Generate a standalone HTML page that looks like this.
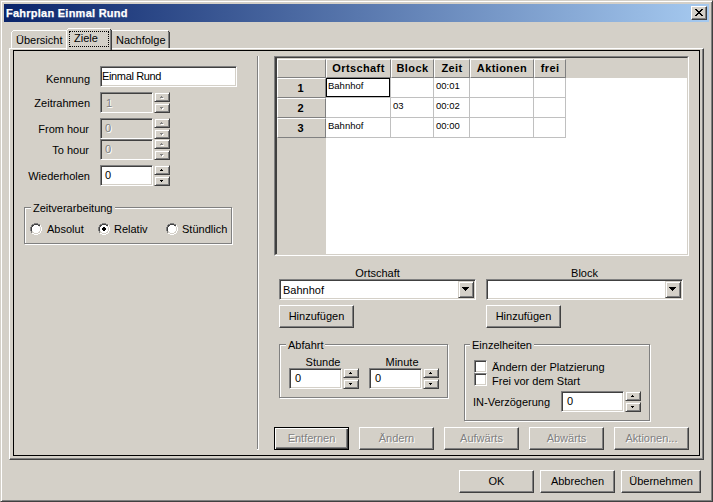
<!DOCTYPE html>
<html><head><meta charset="utf-8"><style>
*{box-sizing:border-box;margin:0;padding:0}
html,body{width:713px;height:502px;overflow:hidden;background:#d4d0c8}
body{position:relative;font-family:"Liberation Sans",sans-serif;font-size:11px;line-height:13px;color:#000}
.a{position:absolute}
.t{position:absolute;white-space:pre;line-height:13px}
.r{text-align:right}
.c{text-align:center}
.b{font-weight:bold}
.dis{color:#808080;text-shadow:1px 1px 0 #fff}
.btn{position:absolute;background:#d4d0c8;border:1px solid;border-color:#fff #404040 #404040 #fff;box-shadow:inset -1px -1px 0 #808080}
.btnd{position:absolute;background:#d4d0c8;border:1px solid #000;box-shadow:inset 1px 1px 0 #fff,inset -1px -1px 0 #404040,inset -2px -2px 0 #808080}
.edit{position:absolute;background:#fff;border:1px solid;border-color:#808080 #fff #fff #808080;box-shadow:inset 1px 1px 0 #404040,inset -1px -1px 0 #d4d0c8}
.edit.dd{background:#d4d0c8}
.sb{position:absolute;background:#d4d0c8;border:1px solid;border-color:#d4d0c8 #404040 #404040 #d4d0c8;box-shadow:inset 1px 1px 0 #fff,inset -1px -1px 0 #808080}
.grp{position:absolute;border:1px solid #808080;box-shadow:inset 1px 1px 0 #fff,1px 1px 0 #fff}
.gl{position:absolute;background:#d4d0c8;white-space:pre;line-height:13px;padding:0 2px}
svg{position:absolute;overflow:visible}
</style></head><body>
<div class="a" style="left:0px;top:0px;width:713px;height:502px;border:1px solid;border-color:#d4d0c8 #404040 #404040 #d4d0c8;box-shadow:inset 1px 1px 0 #fff,inset -1px -1px 0 #808080"></div>
<div class="a" style="left:4px;top:4px;width:705px;height:18px;background:linear-gradient(to right,#0a246a,#a6caf0)"></div>
<div class="t b" style="left:6px;top:7px;color:#fff;letter-spacing:0.25px;-webkit-text-stroke:0.25px #fff">Fahrplan Einmal Rund</div>
<div class="btn" style="left:691px;top:6px;width:16px;height:14px;"></div>
<svg style="left:695px;top:9px" width="8" height="7" shape-rendering="crispEdges"><rect x="0" y="0" width="2" height="1" fill="#000"/><rect x="6" y="0" width="2" height="1" fill="#000"/><rect x="1" y="1" width="2" height="1" fill="#000"/><rect x="5" y="1" width="2" height="1" fill="#000"/><rect x="2" y="2" width="4" height="1" fill="#000"/><rect x="3" y="3" width="2" height="1" fill="#000"/><rect x="2" y="4" width="4" height="1" fill="#000"/><rect x="1" y="5" width="2" height="1" fill="#000"/><rect x="5" y="5" width="2" height="1" fill="#000"/><rect x="0" y="6" width="2" height="1" fill="#000"/><rect x="6" y="6" width="2" height="1" fill="#000"/></svg>
<div class="a" style="left:9px;top:48px;width:695px;height:412px;border:1px solid;border-color:#fff #404040 #404040 #fff;box-shadow:inset -1px -1px 0 #808080"></div>
<div class="a" style="left:11px;top:30px;width:56px;height:18px;border-left:1px solid #fff;border-top:1px solid #fff;background:#d4d0c8"></div>
<div class="a" style="left:11px;top:30px;width:2px;height:2px;background:#d4d0c8"></div>
<div class="a" style="left:12px;top:31px;width:1px;height:1px;background:#fff"></div>
<div class="t " style="left:16px;top:34px;">Übersicht</div>
<div class="a" style="left:109px;top:30px;width:61px;height:18px;border-top:1px solid #fff;border-right:1px solid #404040;box-shadow:inset -1px 0 0 #808080;background:#d4d0c8"></div>
<div class="a" style="left:168px;top:30px;width:2px;height:2px;background:#d4d0c8"></div>
<div class="a" style="left:168px;top:31px;width:1px;height:1px;background:#404040"></div>
<div class="t " style="left:116px;top:34px;">Nachfolge</div>
<div class="a" style="left:66px;top:28px;width:46px;height:22px;border-left:1px solid #fff;border-top:1px solid #fff;border-right:1px solid #404040;box-shadow:inset -1px 0 0 #808080;background:#d4d0c8"></div>
<div class="a" style="left:66px;top:28px;width:2px;height:2px;background:#d4d0c8"></div>
<div class="a" style="left:67px;top:29px;width:1px;height:1px;background:#fff"></div>
<div class="a" style="left:110px;top:28px;width:2px;height:2px;background:#d4d0c8"></div>
<div class="a" style="left:110px;top:29px;width:1px;height:1px;background:#404040"></div>
<div class="t " style="left:74px;top:32px;">Ziele</div>
<div class="a" style="left:69px;top:31px;width:40px;height:16px;border:1px dotted #000"></div>
<div class="a" style="left:13px;top:50px;width:687px;height:406px;border:1px solid #000"></div>
<div class="a" style="left:257px;top:56px;width:2px;height:393px;border-left:1px solid #808080;border-right:1px solid #fff"></div>
<div class="a" style="left:257px;top:449px;width:2px;height:1px;background:#fff"></div>
<div class="t r " style="left:-60px;width:150px;top:73px;">Kennung</div>
<div class="edit" style="left:100px;top:66px;width:137px;height:21px;"></div>
<div class="t " style="left:102px;top:70px;letter-spacing:-0.35px">Einmal Rund</div>
<div class="t r " style="left:-60px;width:150px;top:97px;">Zeitrahmen</div>
<div class="edit dd" style="left:100px;top:92px;width:53px;height:21px;"></div>
<div class="t dis" style="left:106px;top:97px;">1</div>
<div class="sb" style="left:154px;top:92px;width:16px;height:10px;"></div>
<div class="sb" style="left:154px;top:103px;width:16px;height:10px;"></div>
<svg style="left:161px;top:97px" width="3" height="2" shape-rendering="crispEdges"><rect x="1" y="0" width="1" height="1" fill="#fff"/><rect x="0" y="1" width="3" height="1" fill="#fff"/></svg>
<svg style="left:160px;top:96px" width="3" height="2" shape-rendering="crispEdges"><rect x="1" y="0" width="1" height="1" fill="#808080"/><rect x="0" y="1" width="3" height="1" fill="#808080"/></svg>
<svg style="left:161px;top:108px" width="3" height="2" shape-rendering="crispEdges"><rect x="0" y="0" width="3" height="1" fill="#fff"/><rect x="1" y="1" width="1" height="1" fill="#fff"/></svg>
<svg style="left:160px;top:107px" width="3" height="2" shape-rendering="crispEdges"><rect x="0" y="0" width="3" height="1" fill="#808080"/><rect x="1" y="1" width="1" height="1" fill="#808080"/></svg>
<div class="t r " style="left:-61px;width:150px;top:123px;">From hour</div>
<div class="edit dd" style="left:100px;top:118px;width:53px;height:21px;"></div>
<div class="t dis" style="left:105px;top:122px;">0</div>
<div class="sb" style="left:154px;top:118px;width:16px;height:10px;"></div>
<div class="sb" style="left:154px;top:129px;width:16px;height:10px;"></div>
<svg style="left:161px;top:123px" width="3" height="2" shape-rendering="crispEdges"><rect x="1" y="0" width="1" height="1" fill="#fff"/><rect x="0" y="1" width="3" height="1" fill="#fff"/></svg>
<svg style="left:160px;top:122px" width="3" height="2" shape-rendering="crispEdges"><rect x="1" y="0" width="1" height="1" fill="#808080"/><rect x="0" y="1" width="3" height="1" fill="#808080"/></svg>
<svg style="left:161px;top:134px" width="3" height="2" shape-rendering="crispEdges"><rect x="0" y="0" width="3" height="1" fill="#fff"/><rect x="1" y="1" width="1" height="1" fill="#fff"/></svg>
<svg style="left:160px;top:133px" width="3" height="2" shape-rendering="crispEdges"><rect x="0" y="0" width="3" height="1" fill="#808080"/><rect x="1" y="1" width="1" height="1" fill="#808080"/></svg>
<div class="t r " style="left:-61px;width:150px;top:144px;">To hour</div>
<div class="edit dd" style="left:100px;top:139px;width:53px;height:21px;"></div>
<div class="t dis" style="left:105px;top:143px;">0</div>
<div class="sb" style="left:154px;top:139px;width:16px;height:10px;"></div>
<div class="sb" style="left:154px;top:150px;width:16px;height:10px;"></div>
<svg style="left:161px;top:144px" width="3" height="2" shape-rendering="crispEdges"><rect x="1" y="0" width="1" height="1" fill="#fff"/><rect x="0" y="1" width="3" height="1" fill="#fff"/></svg>
<svg style="left:160px;top:143px" width="3" height="2" shape-rendering="crispEdges"><rect x="1" y="0" width="1" height="1" fill="#808080"/><rect x="0" y="1" width="3" height="1" fill="#808080"/></svg>
<svg style="left:161px;top:155px" width="3" height="2" shape-rendering="crispEdges"><rect x="0" y="0" width="3" height="1" fill="#fff"/><rect x="1" y="1" width="1" height="1" fill="#fff"/></svg>
<svg style="left:160px;top:154px" width="3" height="2" shape-rendering="crispEdges"><rect x="0" y="0" width="3" height="1" fill="#808080"/><rect x="1" y="1" width="1" height="1" fill="#808080"/></svg>
<div class="t r " style="left:-60px;width:150px;top:170px;">Wiederholen</div>
<div class="edit" style="left:100px;top:165px;width:53px;height:21px;"></div>
<div class="t " style="left:105px;top:169px;">0</div>
<div class="sb" style="left:154px;top:165px;width:16px;height:10px;"></div>
<div class="sb" style="left:154px;top:176px;width:16px;height:10px;"></div>
<svg style="left:160px;top:169px" width="3" height="2" shape-rendering="crispEdges"><rect x="1" y="0" width="1" height="1" fill="#000"/><rect x="0" y="1" width="3" height="1" fill="#000"/></svg>
<svg style="left:160px;top:180px" width="3" height="2" shape-rendering="crispEdges"><rect x="0" y="0" width="3" height="1" fill="#000"/><rect x="1" y="1" width="1" height="1" fill="#000"/></svg>
<div class="grp" style="left:24px;top:207px;width:208px;height:37px;"></div>
<div class="gl" style="left:31px;top:202px">Zeitverarbeitung</div>
<svg style="left:30px;top:223px" width="12" height="12" shape-rendering="crispEdges"><rect x="4" y="0" width="4" height="1" fill="#808080"/><rect x="2" y="1" width="2" height="1" fill="#808080"/><rect x="4" y="1" width="4" height="1" fill="#404040"/><rect x="8" y="1" width="2" height="1" fill="#808080"/><rect x="1" y="2" width="1" height="1" fill="#808080"/><rect x="2" y="2" width="2" height="1" fill="#404040"/><rect x="4" y="2" width="4" height="1" fill="#fff"/><rect x="8" y="2" width="2" height="1" fill="#404040"/><rect x="10" y="2" width="1" height="1" fill="#fff"/><rect x="1" y="3" width="1" height="1" fill="#808080"/><rect x="2" y="3" width="1" height="1" fill="#404040"/><rect x="3" y="3" width="6" height="1" fill="#fff"/><rect x="9" y="3" width="1" height="1" fill="#d4d0c8"/><rect x="10" y="3" width="1" height="1" fill="#fff"/><rect x="0" y="4" width="1" height="1" fill="#808080"/><rect x="1" y="4" width="1" height="1" fill="#404040"/><rect x="2" y="4" width="8" height="1" fill="#fff"/><rect x="10" y="4" width="1" height="1" fill="#d4d0c8"/><rect x="11" y="4" width="1" height="1" fill="#fff"/><rect x="0" y="5" width="1" height="1" fill="#808080"/><rect x="1" y="5" width="1" height="1" fill="#404040"/><rect x="2" y="5" width="8" height="1" fill="#fff"/><rect x="10" y="5" width="1" height="1" fill="#d4d0c8"/><rect x="11" y="5" width="1" height="1" fill="#fff"/><rect x="0" y="6" width="1" height="1" fill="#808080"/><rect x="1" y="6" width="1" height="1" fill="#404040"/><rect x="2" y="6" width="8" height="1" fill="#fff"/><rect x="10" y="6" width="1" height="1" fill="#d4d0c8"/><rect x="11" y="6" width="1" height="1" fill="#fff"/><rect x="0" y="7" width="1" height="1" fill="#808080"/><rect x="1" y="7" width="1" height="1" fill="#404040"/><rect x="2" y="7" width="8" height="1" fill="#fff"/><rect x="10" y="7" width="1" height="1" fill="#d4d0c8"/><rect x="11" y="7" width="1" height="1" fill="#fff"/><rect x="1" y="8" width="1" height="1" fill="#808080"/><rect x="2" y="8" width="1" height="1" fill="#d4d0c8"/><rect x="3" y="8" width="6" height="1" fill="#fff"/><rect x="9" y="8" width="1" height="1" fill="#d4d0c8"/><rect x="10" y="8" width="1" height="1" fill="#fff"/><rect x="1" y="9" width="1" height="1" fill="#808080"/><rect x="2" y="9" width="2" height="1" fill="#d4d0c8"/><rect x="4" y="9" width="4" height="1" fill="#fff"/><rect x="8" y="9" width="2" height="1" fill="#d4d0c8"/><rect x="10" y="9" width="1" height="1" fill="#fff"/><rect x="2" y="10" width="2" height="1" fill="#fff"/><rect x="4" y="10" width="4" height="1" fill="#d4d0c8"/><rect x="8" y="10" width="2" height="1" fill="#fff"/><rect x="4" y="11" width="4" height="1" fill="#fff"/></svg>
<div class="t " style="left:47px;top:223px;">Absolut</div>
<svg style="left:98px;top:223px" width="12" height="12" shape-rendering="crispEdges"><rect x="4" y="0" width="4" height="1" fill="#808080"/><rect x="2" y="1" width="2" height="1" fill="#808080"/><rect x="4" y="1" width="4" height="1" fill="#404040"/><rect x="8" y="1" width="2" height="1" fill="#808080"/><rect x="1" y="2" width="1" height="1" fill="#808080"/><rect x="2" y="2" width="2" height="1" fill="#404040"/><rect x="4" y="2" width="4" height="1" fill="#fff"/><rect x="8" y="2" width="2" height="1" fill="#404040"/><rect x="10" y="2" width="1" height="1" fill="#fff"/><rect x="1" y="3" width="1" height="1" fill="#808080"/><rect x="2" y="3" width="1" height="1" fill="#404040"/><rect x="3" y="3" width="6" height="1" fill="#fff"/><rect x="9" y="3" width="1" height="1" fill="#d4d0c8"/><rect x="10" y="3" width="1" height="1" fill="#fff"/><rect x="0" y="4" width="1" height="1" fill="#808080"/><rect x="1" y="4" width="1" height="1" fill="#404040"/><rect x="2" y="4" width="8" height="1" fill="#fff"/><rect x="10" y="4" width="1" height="1" fill="#d4d0c8"/><rect x="11" y="4" width="1" height="1" fill="#fff"/><rect x="0" y="5" width="1" height="1" fill="#808080"/><rect x="1" y="5" width="1" height="1" fill="#404040"/><rect x="2" y="5" width="8" height="1" fill="#fff"/><rect x="10" y="5" width="1" height="1" fill="#d4d0c8"/><rect x="11" y="5" width="1" height="1" fill="#fff"/><rect x="0" y="6" width="1" height="1" fill="#808080"/><rect x="1" y="6" width="1" height="1" fill="#404040"/><rect x="2" y="6" width="8" height="1" fill="#fff"/><rect x="10" y="6" width="1" height="1" fill="#d4d0c8"/><rect x="11" y="6" width="1" height="1" fill="#fff"/><rect x="0" y="7" width="1" height="1" fill="#808080"/><rect x="1" y="7" width="1" height="1" fill="#404040"/><rect x="2" y="7" width="8" height="1" fill="#fff"/><rect x="10" y="7" width="1" height="1" fill="#d4d0c8"/><rect x="11" y="7" width="1" height="1" fill="#fff"/><rect x="1" y="8" width="1" height="1" fill="#808080"/><rect x="2" y="8" width="1" height="1" fill="#d4d0c8"/><rect x="3" y="8" width="6" height="1" fill="#fff"/><rect x="9" y="8" width="1" height="1" fill="#d4d0c8"/><rect x="10" y="8" width="1" height="1" fill="#fff"/><rect x="1" y="9" width="1" height="1" fill="#808080"/><rect x="2" y="9" width="2" height="1" fill="#d4d0c8"/><rect x="4" y="9" width="4" height="1" fill="#fff"/><rect x="8" y="9" width="2" height="1" fill="#d4d0c8"/><rect x="10" y="9" width="1" height="1" fill="#fff"/><rect x="2" y="10" width="2" height="1" fill="#fff"/><rect x="4" y="10" width="4" height="1" fill="#d4d0c8"/><rect x="8" y="10" width="2" height="1" fill="#fff"/><rect x="4" y="11" width="4" height="1" fill="#fff"/></svg>
<svg style="left:102px;top:227px" width="4" height="4" shape-rendering="crispEdges"><rect x="1" y="0" width="2" height="1" fill="#000"/><rect x="0" y="1" width="4" height="1" fill="#000"/><rect x="0" y="2" width="4" height="1" fill="#000"/><rect x="1" y="3" width="2" height="1" fill="#000"/></svg>
<div class="t " style="left:114px;top:223px;">Relativ</div>
<svg style="left:166px;top:223px" width="12" height="12" shape-rendering="crispEdges"><rect x="4" y="0" width="4" height="1" fill="#808080"/><rect x="2" y="1" width="2" height="1" fill="#808080"/><rect x="4" y="1" width="4" height="1" fill="#404040"/><rect x="8" y="1" width="2" height="1" fill="#808080"/><rect x="1" y="2" width="1" height="1" fill="#808080"/><rect x="2" y="2" width="2" height="1" fill="#404040"/><rect x="4" y="2" width="4" height="1" fill="#fff"/><rect x="8" y="2" width="2" height="1" fill="#404040"/><rect x="10" y="2" width="1" height="1" fill="#fff"/><rect x="1" y="3" width="1" height="1" fill="#808080"/><rect x="2" y="3" width="1" height="1" fill="#404040"/><rect x="3" y="3" width="6" height="1" fill="#fff"/><rect x="9" y="3" width="1" height="1" fill="#d4d0c8"/><rect x="10" y="3" width="1" height="1" fill="#fff"/><rect x="0" y="4" width="1" height="1" fill="#808080"/><rect x="1" y="4" width="1" height="1" fill="#404040"/><rect x="2" y="4" width="8" height="1" fill="#fff"/><rect x="10" y="4" width="1" height="1" fill="#d4d0c8"/><rect x="11" y="4" width="1" height="1" fill="#fff"/><rect x="0" y="5" width="1" height="1" fill="#808080"/><rect x="1" y="5" width="1" height="1" fill="#404040"/><rect x="2" y="5" width="8" height="1" fill="#fff"/><rect x="10" y="5" width="1" height="1" fill="#d4d0c8"/><rect x="11" y="5" width="1" height="1" fill="#fff"/><rect x="0" y="6" width="1" height="1" fill="#808080"/><rect x="1" y="6" width="1" height="1" fill="#404040"/><rect x="2" y="6" width="8" height="1" fill="#fff"/><rect x="10" y="6" width="1" height="1" fill="#d4d0c8"/><rect x="11" y="6" width="1" height="1" fill="#fff"/><rect x="0" y="7" width="1" height="1" fill="#808080"/><rect x="1" y="7" width="1" height="1" fill="#404040"/><rect x="2" y="7" width="8" height="1" fill="#fff"/><rect x="10" y="7" width="1" height="1" fill="#d4d0c8"/><rect x="11" y="7" width="1" height="1" fill="#fff"/><rect x="1" y="8" width="1" height="1" fill="#808080"/><rect x="2" y="8" width="1" height="1" fill="#d4d0c8"/><rect x="3" y="8" width="6" height="1" fill="#fff"/><rect x="9" y="8" width="1" height="1" fill="#d4d0c8"/><rect x="10" y="8" width="1" height="1" fill="#fff"/><rect x="1" y="9" width="1" height="1" fill="#808080"/><rect x="2" y="9" width="2" height="1" fill="#d4d0c8"/><rect x="4" y="9" width="4" height="1" fill="#fff"/><rect x="8" y="9" width="2" height="1" fill="#d4d0c8"/><rect x="10" y="9" width="1" height="1" fill="#fff"/><rect x="2" y="10" width="2" height="1" fill="#fff"/><rect x="4" y="10" width="4" height="1" fill="#d4d0c8"/><rect x="8" y="10" width="2" height="1" fill="#fff"/><rect x="4" y="11" width="4" height="1" fill="#fff"/></svg>
<div class="t " style="left:182px;top:223px;">Stündlich</div>
<div class="a" style="left:274px;top:56px;width:415px;height:200px;background:#fff;border:2px solid;border-color:#808080 #fff #fff #808080"></div>
<div class="a" style="left:275px;top:57px;width:413px;height:198px;border:1px solid;border-color:#404040 #d4d0c8 #d4d0c8 #404040"></div>
<div class="a" style="left:276px;top:58px;width:411px;height:20px;background:#d4d0c8;border-left:1px solid #404040"></div>
<div class="a" style="left:276px;top:58px;width:50px;height:196px;background:#d4d0c8;border-left:1px solid #404040"></div>
<div class="a" style="left:277px;top:59px;width:49px;height:19px;border-left:1px solid #fff;border-top:1px solid #fff;border-right:1px solid #808080;border-bottom:1px solid #808080"></div>
<div class="a" style="left:326px;top:59px;width:65px;height:19px;border-left:1px solid #fff;border-top:1px solid #fff;border-right:1px solid #808080;border-bottom:1px solid #808080"></div>
<div class="t c b" style="left:326px;width:65px;top:62px;letter-spacing:0.4px">Ortschaft</div>
<div class="a" style="left:391px;top:59px;width:43px;height:19px;border-left:1px solid #fff;border-top:1px solid #fff;border-right:1px solid #808080;border-bottom:1px solid #808080"></div>
<div class="t c b" style="left:391px;width:43px;top:62px;letter-spacing:0.4px">Block</div>
<div class="a" style="left:434px;top:59px;width:36px;height:19px;border-left:1px solid #fff;border-top:1px solid #fff;border-right:1px solid #808080;border-bottom:1px solid #808080"></div>
<div class="t c b" style="left:434px;width:36px;top:62px;letter-spacing:0.4px">Zeit</div>
<div class="a" style="left:470px;top:59px;width:64px;height:19px;border-left:1px solid #fff;border-top:1px solid #fff;border-right:1px solid #808080;border-bottom:1px solid #808080"></div>
<div class="t c b" style="left:470px;width:64px;top:62px;letter-spacing:0.4px">Aktionen</div>
<div class="a" style="left:534px;top:59px;width:32px;height:19px;border-left:1px solid #fff;border-top:1px solid #fff;border-right:1px solid #808080;border-bottom:1px solid #808080"></div>
<div class="t c b" style="left:534px;width:32px;top:62px;letter-spacing:0.4px">frei</div>
<div class="a" style="left:277px;top:78px;width:49px;height:20px;border-left:1px solid #fff;border-top:1px solid #fff;border-right:1px solid #808080;border-bottom:1px solid #808080"></div>
<div class="t c b" style="left:276px;width:49px;top:82px;">1</div>
<div class="a" style="left:277px;top:98px;width:49px;height:20px;border-left:1px solid #fff;border-top:1px solid #fff;border-right:1px solid #808080;border-bottom:1px solid #808080"></div>
<div class="t c b" style="left:276px;width:49px;top:102px;">2</div>
<div class="a" style="left:277px;top:118px;width:49px;height:20px;border-left:1px solid #fff;border-top:1px solid #fff;border-right:1px solid #808080;border-bottom:1px solid #808080"></div>
<div class="t c b" style="left:276px;width:49px;top:122px;">3</div>
<div class="a" style="left:390px;top:78px;width:1px;height:60px;background:#c0c0c0"></div>
<div class="a" style="left:433px;top:78px;width:1px;height:60px;background:#c0c0c0"></div>
<div class="a" style="left:469px;top:78px;width:1px;height:60px;background:#c0c0c0"></div>
<div class="a" style="left:533px;top:78px;width:1px;height:60px;background:#c0c0c0"></div>
<div class="a" style="left:565px;top:78px;width:1px;height:60px;background:#c0c0c0"></div>
<div class="a" style="left:326px;top:97px;width:240px;height:1px;background:#c0c0c0"></div>
<div class="a" style="left:326px;top:117px;width:240px;height:1px;background:#c0c0c0"></div>
<div class="a" style="left:326px;top:137px;width:240px;height:1px;background:#c0c0c0"></div>
<div class="a" style="left:326px;top:78px;width:64px;height:19px;border:1px solid #000"></div>
<div class="t" style="left:328px;top:79px;font-size:9.5px">Bahnhof</div>
<div class="t" style="left:436px;top:79px;font-size:9.5px">00:01</div>
<div class="t" style="left:393px;top:99px;font-size:9.5px">03</div>
<div class="t" style="left:436px;top:99px;font-size:9.5px">00:02</div>
<div class="t" style="left:328px;top:119px;font-size:9.5px">Bahnhof</div>
<div class="t" style="left:436px;top:119px;font-size:9.5px">00:00</div>
<div class="t c " style="left:279px;width:197px;top:267px;">Ortschaft</div>
<div class="edit" style="left:279px;top:279px;width:197px;height:21px;"></div>
<div class="t " style="left:283px;top:284px;">Bahnhof</div>
<div class="btn" style="left:458px;top:281px;width:16px;height:17px;border-color:#d4d0c8 #404040 #404040 #d4d0c8;box-shadow:inset 1px 1px 0 #fff,inset -1px -1px 0 #808080"></div>
<svg style="left:462px;top:287px" width="7" height="4" shape-rendering="crispEdges"><rect x="0" y="0" width="7" height="1" fill="#000"/><rect x="1" y="1" width="5" height="1" fill="#000"/><rect x="2" y="2" width="3" height="1" fill="#000"/><rect x="3" y="3" width="1" height="1" fill="#000"/></svg>
<div class="btn" style="left:279px;top:305px;width:75px;height:23px;"></div>
<div class="t c " style="left:279px;width:75px;top:310px;">Hinzufügen</div>
<div class="t c " style="left:486px;width:197px;top:267px;">Block</div>
<div class="edit" style="left:486px;top:279px;width:197px;height:21px;"></div>
<div class="btn" style="left:665px;top:281px;width:16px;height:17px;border-color:#d4d0c8 #404040 #404040 #d4d0c8;box-shadow:inset 1px 1px 0 #fff,inset -1px -1px 0 #808080"></div>
<svg style="left:669px;top:287px" width="7" height="4" shape-rendering="crispEdges"><rect x="0" y="0" width="7" height="1" fill="#000"/><rect x="1" y="1" width="5" height="1" fill="#000"/><rect x="2" y="2" width="3" height="1" fill="#000"/><rect x="3" y="3" width="1" height="1" fill="#000"/></svg>
<div class="btn" style="left:486px;top:305px;width:75px;height:23px;"></div>
<div class="t c " style="left:486px;width:75px;top:310px;">Hinzufügen</div>
<div class="grp" style="left:279px;top:344px;width:169px;height:54px;"></div>
<div class="gl" style="left:286px;top:339px">Abfahrt</div>
<div class="t c " style="left:288px;width:70px;top:356px;">Stunde</div>
<div class="edit" style="left:289px;top:368px;width:53px;height:21px;"></div>
<div class="t " style="left:295px;top:372px;">0</div>
<div class="sb" style="left:343px;top:368px;width:16px;height:10px;"></div>
<div class="sb" style="left:343px;top:379px;width:16px;height:10px;"></div>
<svg style="left:349px;top:372px" width="3" height="2" shape-rendering="crispEdges"><rect x="1" y="0" width="1" height="1" fill="#000"/><rect x="0" y="1" width="3" height="1" fill="#000"/></svg>
<svg style="left:349px;top:383px" width="3" height="2" shape-rendering="crispEdges"><rect x="0" y="0" width="3" height="1" fill="#000"/><rect x="1" y="1" width="1" height="1" fill="#000"/></svg>
<div class="t c " style="left:367px;width:70px;top:356px;">Minute</div>
<div class="edit" style="left:369px;top:368px;width:53px;height:21px;"></div>
<div class="t " style="left:375px;top:372px;">0</div>
<div class="sb" style="left:423px;top:368px;width:16px;height:10px;"></div>
<div class="sb" style="left:423px;top:379px;width:16px;height:10px;"></div>
<svg style="left:429px;top:372px" width="3" height="2" shape-rendering="crispEdges"><rect x="1" y="0" width="1" height="1" fill="#000"/><rect x="0" y="1" width="3" height="1" fill="#000"/></svg>
<svg style="left:429px;top:383px" width="3" height="2" shape-rendering="crispEdges"><rect x="0" y="0" width="3" height="1" fill="#000"/><rect x="1" y="1" width="1" height="1" fill="#000"/></svg>
<div class="grp" style="left:464px;top:344px;width:186px;height:77px;"></div>
<div class="gl" style="left:470px;top:339px">Einzelheiten</div>
<div class="edit" style="left:474px;top:360px;width:13px;height:13px;"></div>
<div class="t " style="left:492px;top:361px;">Ändern der Platzierung</div>
<div class="edit" style="left:474px;top:373px;width:13px;height:13px;"></div>
<div class="t " style="left:492px;top:375px;">Frei vor dem Start</div>
<div class="t " style="left:473px;top:396px;">IN-Verzögerung</div>
<div class="edit" style="left:561px;top:391px;width:63px;height:21px;"></div>
<div class="t " style="left:567px;top:395px;">0</div>
<div class="sb" style="left:625px;top:391px;width:16px;height:10px;"></div>
<div class="sb" style="left:625px;top:402px;width:16px;height:10px;"></div>
<svg style="left:631px;top:395px" width="3" height="2" shape-rendering="crispEdges"><rect x="1" y="0" width="1" height="1" fill="#000"/><rect x="0" y="1" width="3" height="1" fill="#000"/></svg>
<svg style="left:631px;top:406px" width="3" height="2" shape-rendering="crispEdges"><rect x="0" y="0" width="3" height="1" fill="#000"/><rect x="1" y="1" width="1" height="1" fill="#000"/></svg>
<div class="btnd" style="left:274px;top:427px;width:75px;height:23px;"></div>
<div class="t c dis" style="left:274px;width:75px;top:432px;">Entfernen</div>
<div class="btn" style="left:359px;top:427px;width:75px;height:23px;"></div>
<div class="t c dis" style="left:359px;width:75px;top:432px;">Ändern</div>
<div class="btn" style="left:444px;top:427px;width:75px;height:23px;"></div>
<div class="t c dis" style="left:444px;width:75px;top:432px;">Aufwärts</div>
<div class="btn" style="left:529px;top:427px;width:75px;height:23px;"></div>
<div class="t c dis" style="left:529px;width:75px;top:432px;">Abwärts</div>
<div class="btn" style="left:614px;top:427px;width:75px;height:23px;"></div>
<div class="t c dis" style="left:614px;width:75px;top:432px;">Aktionen...</div>
<div class="btn" style="left:459px;top:470px;width:75px;height:23px;"></div>
<div class="t c " style="left:459px;width:75px;top:475px;">OK</div>
<div class="btn" style="left:540px;top:470px;width:75px;height:23px;"></div>
<div class="t c " style="left:540px;width:75px;top:475px;">Abbrechen</div>
<div class="btn" style="left:621px;top:470px;width:80px;height:23px;"></div>
<div class="t c " style="left:621px;width:80px;top:475px;">Übernehmen</div>
</body></html>
